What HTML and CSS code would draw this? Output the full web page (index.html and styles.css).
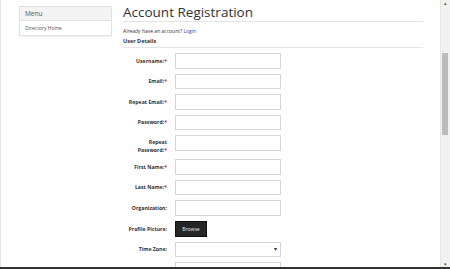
FILE: index.html
```html
<!DOCTYPE html>
<html lang="en">
<head>
  <meta charset="UTF-8" />
  <title>Account Registration</title>
  <link rel="stylesheet" href="styles.css">
</head>
<body>
  <div class="window">
    <div class="viewport">
      <aside class="sidebar">
        <div class="menu">
          <div class="menu-head">Menu</div>
          <a class="menu-item" href="#">Directory Home</a>
        </div>
      </aside>

      <main class="content">
        <h1 class="title">Account Registration</h1>
        <p class="login-note">Already have an account? <a href="#">Login</a></p>
        <h2 class="section">User Details</h2>

        <form class="form">
          <div class="row">
            <label class="label">Username:<span class="req">*</span></label>
            <input class="field" type="text">
          </div>
          <div class="row">
            <label class="label">Email:<span class="req">*</span></label>
            <input class="field" type="text">
          </div>
          <div class="row">
            <label class="label">Repeat Email:<span class="req">*</span></label>
            <input class="field" type="text">
          </div>
          <div class="row">
            <label class="label">Password:<span class="req">*</span></label>
            <input class="field" type="password">
          </div>
          <div class="row row-tall">
            <label class="label">Repeat<br>Password:<span class="req">*</span></label>
            <input class="field" type="password">
          </div>
          <div class="row">
            <label class="label">First Name:<span class="req">*</span></label>
            <input class="field" type="text">
          </div>
          <div class="row">
            <label class="label">Last Name:<span class="req">*</span></label>
            <input class="field" type="text">
          </div>
          <div class="row">
            <label class="label">Organization:</label>
            <input class="field" type="text">
          </div>
          <div class="row">
            <label class="label">Profile Picture:</label>
            <button class="browse" type="button">Browse</button>
          </div>
          <div class="row">
            <label class="label">Time Zone:</label>
            <div class="field select"><span class="caret">&#9662;</span></div>
          </div>
          <div class="row">
            <label class="label"></label>
            <input class="field" type="text">
          </div>
        </form>
      </main>
    </div>

    <div class="scrollbar">
      <div class="arrow">&#9652;</div>
      <div class="track"><div class="thumb"></div></div>
      <div class="arrow">&#9662;</div>
    </div>
  </div>
  <div class="taskbar"></div>
</body>
</html>
```

FILE: styles.css
```css
html, body {
  margin: 0;
  height: 269px;
  overflow: hidden;
}
body {
  font-family: "Open Sans", "Liberation Sans", sans-serif;
  color: #333;
  background: #fff;
  display: flex;
  flex-direction: column;
}
.window {
  flex: 1;
  display: flex;
  min-height: 0;
}
.viewport {
  flex: 1;
  display: flex;
  gap: 11px;
  padding-left: 18px;
  border-left: 1px solid #e6e6e6;
  overflow: hidden;
}
.sidebar {
  width: 93px;
  padding-top: 6px;
}
.menu {
  border: 1px solid #e2e2e2;
  box-shadow: 0 1px 1px rgba(0,0,0,0.05);
}
.menu-head {
  background: #f3f3f3;
  border-bottom: 1px solid #e2e2e2;
  height: 13px;
  line-height: 13px;
  padding-left: 5px;
  font-size: 6.5px;
  color: #555;
}
.menu-item {
  display: block;
  height: 14px;
  line-height: 14px;
  padding-left: 5px;
  font-size: 5px;
  color: #555;
  text-decoration: none;
}
.content {
  width: 300px;
  padding-top: 3px;
}
.title {
  margin: 0;
  font-size: 13.5px;
  font-weight: 400;
  line-height: 18px;
  color: #333;
  border-bottom: 1px solid #e4e4e4;
}
.login-note {
  margin: 5px 0 0;
  font-size: 5px;
  line-height: 8px;
}
.login-note a {
  color: #3a4aa8;
  text-decoration: none;
}
.section {
  margin: 2px 0 0;
  font-size: 5.5px;
  font-weight: 700;
  line-height: 8px;
  padding-bottom: 2px;
  border-bottom: 1px solid #e4e4e4;
}
.form {
  margin-top: 5px;
  display: flex;
  flex-direction: column;
  gap: 5px;
}
.row {
  display: flex;
  align-items: center;
  gap: 8px;
}
.row-tall {
  margin-bottom: 3px;
}
.label {
  width: 44px;
  text-align: right;
  font-size: 5.2px;
  font-weight: 700;
  line-height: 8px;
  color: #333;
}
.row-tall .label {
  position: relative;
  top: 3px;
}
.req {
  color: #c9302c;
}
.field {
  box-sizing: border-box;
  width: 106px;
  height: 15.5px;
  margin: 0;
  border: 1px solid #d6d6d6;
  background: #fff;
  padding: 0 3px;
  font-size: 6px;
}
.select {
  display: flex;
  align-items: center;
  justify-content: flex-end;
}
.caret {
  font-size: 6px;
  color: #333;
}
.browse {
  box-sizing: border-box;
  height: 16px;
  width: 32px;
  margin: 0;
  padding: 0;
  border: 1px solid #111;
  background: #262626;
  color: #eee;
  font-family: "Open Sans", "Liberation Sans", sans-serif;
  font-size: 5px;
}
.scrollbar {
  width: 9px;
  background: #f1f1f1;
  border-left: 1px solid #e8e8e8;
  display: flex;
  flex-direction: column;
}
.arrow {
  height: 6px;
  font-size: 5px;
  line-height: 6px;
  text-align: center;
  color: #555;
}
.track {
  flex: 1;
  padding-top: 47px;
}
.thumb {
  width: 6px;
  margin-left: 1px;
  height: 82px;
  background: #bcbcbc;
}
.taskbar {
  height: 2px;
  background: #333;
}
```
